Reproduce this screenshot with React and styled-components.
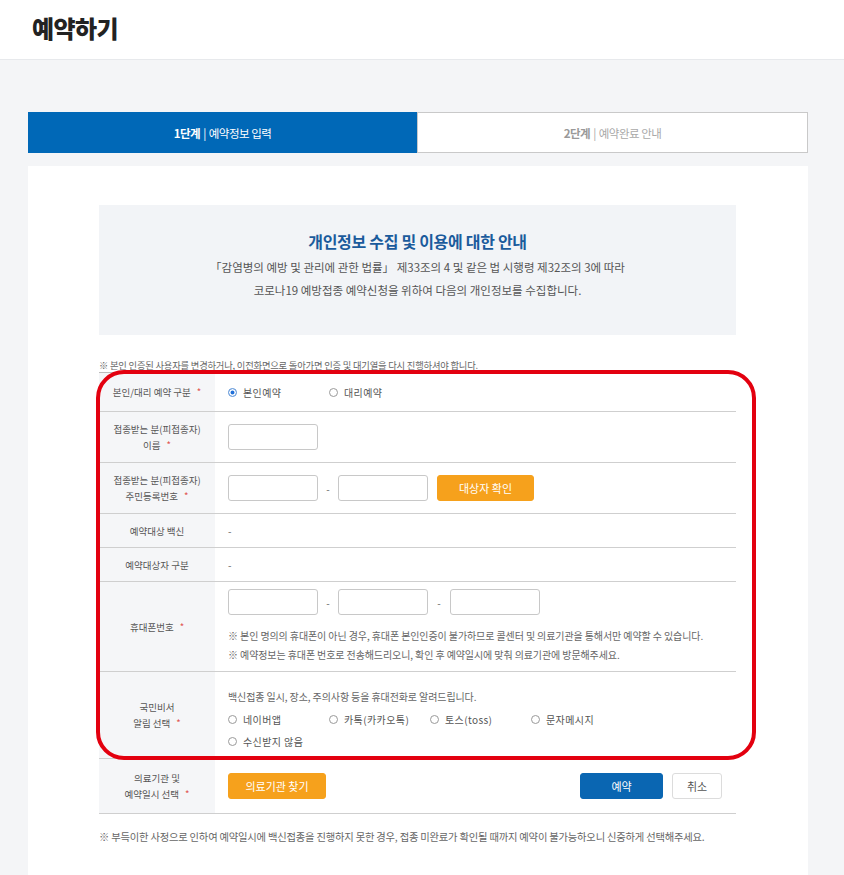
import React, { useState } from "react";
import styled, { createGlobalStyle } from "styled-components";

const GlobalStyle = createGlobalStyle`
  body {
    margin: 0;
    background: #f4f5f7;
    font-family: "Noto Sans CJK KR", "Noto Sans", sans-serif;
    color: #333;
  }
  * { box-sizing: border-box; }
`;

const Header = styled.header`
  height: 60px;
  display: flex;
  align-items: center;
  padding-left: 32px;
  background: #fff;
  border-bottom: 1px solid #e7e9ec;
`;

const PageTitle = styled.h1`
  margin: 0 0 4px;
  font-size: 24px;
  font-weight: 800;
  letter-spacing: -0.6px;
  color: #222;
`;

const Main = styled.main`
  padding: 52px 36px 0 28px;
`;

const Steps = styled.ol`
  display: flex;
  list-style: none;
  margin: 0;
  padding: 0;
  height: 41px;
`;

const Step = styled.li`
  flex: 1;
  display: flex;
  align-items: center;
  justify-content: center;
  font-size: 11.5px;
  letter-spacing: -0.5px;
  background: ${(p) => (p.$active ? "#0068b7" : "#fff")};
  color: ${(p) => (p.$active ? "#fff" : "#a9a9a9")};
  border: ${(p) => (p.$active ? "none" : "1px solid #c9c9c9")};

  > b {
    font-weight: 700;
    color: ${(p) => (p.$active ? "#fff" : "#999")};
  }
  > i {
    font-style: normal;
    margin: 0 3px;
  }
`;

const Card = styled.section`
  margin-top: 13px;
  background: #fff;
  padding: 39px 72px 60px 71px;
`;

const InfoBox = styled.div`
  height: 130px;
  background: #f2f4f7;
  padding-top: 26px;
  text-align: center;
`;

const InfoTitle = styled.h2`
  margin: 0 0 5px;
  font-size: 16px;
  line-height: 20px;
  font-weight: 700;
  color: #1b5b9c;
  letter-spacing: -0.3px;
`;

const InfoText = styled.p`
  margin: 0;
  font-size: 11.5px;
  line-height: 23px;
  color: #555;
`;

const Notice = styled.p`
  margin: ${(p) => p.$mt}px 0 0;
  font-size: ${(p) => p.$size || 9.3}px;
  line-height: 14px;
  color: #666;
  letter-spacing: -0.2px;
`;

const FormTable = styled.div`
  position: relative;
  border-top: 1px solid #bbb;
`;

const Highlight = styled.div`
  position: absolute;
  top: -3px;
  left: -3px;
  right: -20px;
  height: 390px;
  border: 4px solid #e3000f;
  border-radius: 28px;
  pointer-events: none;
`;

const Row = styled.div`
  display: grid;
  grid-template-columns: 116px 1fr;
  height: ${(p) => p.$h}px;
  border-bottom: 1px solid #cfcfcf;
`;

const Label = styled.div`
  display: flex;
  align-items: center;
  justify-content: center;
  text-align: center;
  background: #f5f6f8;
  font-size: 9.5px;
  line-height: 16px;
  color: #555;
`;

const Req = styled.span`
  color: #e0504c;
  margin-left: 6px;
`;

const Value = styled.div`
  display: flex;
  flex-direction: ${(p) => (p.$column ? "column" : "row")};
  justify-content: ${(p) => (p.$column ? "center" : "flex-start")};
  align-items: ${(p) => (p.$column ? "flex-start" : "center")};
  padding: 0 14px 0 13px;
  font-size: 10px;
  color: #666;
`;

const Line = styled.div`
  display: flex;
  align-items: center;
  width: 100%;
`;

const RadioGroup = styled.div`
  display: flex;
  flex-wrap: wrap;
  row-gap: 2px;
  margin-top: ${(p) => p.$mt || 0}px;
`;

const RadioItem = styled.label`
  display: inline-flex;
  align-items: center;
  gap: 6px;
  width: 101px;
  height: 20px;
  font-size: 10px;
  color: #555;
  letter-spacing: 0.4px;
  cursor: pointer;
`;

const RadioDot = styled.span`
  width: 9px;
  height: 9px;
  border-radius: 50%;
  border: 1px solid ${(p) => (p.$on ? "#7aa6dc" : "#9a9a9a")};
  background: ${(p) => (p.$on ? "#1f6fd8" : "#fff")};
  box-shadow: ${(p) => (p.$on ? "inset 0 0 0 1.5px #fff" : "none")};
`;

const TextInput = styled.input`
  width: 90px;
  height: 26px;
  border: 1px solid #c8c8c8;
  border-radius: 3px;
  padding: 0 6px;
  font-size: 10px;
`;

const Dash = styled.span`
  width: ${(p) => p.$w || 20}px;
  text-align: center;
  color: #666;
`;

const Button = styled.button`
  height: 26px;
  width: ${(p) => p.$w}px;
  border-radius: 3px;
  font-family: inherit;
  font-size: 11px;
  cursor: pointer;
  border: 1px solid
    ${(p) => (p.$kind === "orange" ? "#f6a11c" : p.$kind === "blue" ? "#0a66b2" : "#dcdcdc")};
  background: ${(p) => (p.$kind === "orange" ? "#f6a11c" : p.$kind === "blue" ? "#0a66b2" : "#fff")};
  color: ${(p) => (p.$kind === "ghost" ? "#555" : "#fff")};
  margin-left: ${(p) => p.$ml || 0}px;
`;

const Hint = styled.p`
  margin: ${(p) => p.$mt || 0}px 0 0;
  font-size: 10px;
  line-height: 19px;
  color: #666;
  letter-spacing: -0.1px;
`;

const Spacer = styled.div`
  flex: 1;
`;

function Radio({ checked, onChange, children }) {
  return (
    <RadioItem onClick={onChange}>
      <RadioDot $on={checked} />
      {children}
    </RadioItem>
  );
}

function FieldLabel({ lines, required }) {
  return (
    <Label>
      <span>
        {lines.map((l, i) => (
          <React.Fragment key={i}>
            {i > 0 && <br />}
            {l}
          </React.Fragment>
        ))}
        {required && <Req>*</Req>}
      </span>
    </Label>
  );
}

const alarmOptions = ["네이버앱", "카톡(카카오톡)", "토스(toss)", "문자메시지", "수신받지 않음"];

export default function App() {
  const [who, setWho] = useState("self");
  const [alarm, setAlarm] = useState(null);

  return (
    <>
      <GlobalStyle />
      <Header>
        <PageTitle>예약하기</PageTitle>
      </Header>
      <Main>
        <Steps>
          <Step $active>
            <b>1단계</b>
            <i>|</i>예약정보 입력
          </Step>
          <Step>
            <b>2단계</b>
            <i>|</i>예약완료 안내
          </Step>
        </Steps>

        <Card>
          <InfoBox>
            <InfoTitle>개인정보 수집 및 이용에 대한 안내</InfoTitle>
            <InfoText>
              「감염병의 예방 및 관리에 관한 법률」 제33조의 4 및 같은 법 시행령 제32조의 3에 따라
            </InfoText>
            <InfoText>코로나19 예방접종 예약신청을 위하여 다음의 개인정보를 수집합니다.</InfoText>
          </InfoBox>

          <Notice $mt={23}>
            ※ 본인 인증된 사용자를 변경하거나, 이전화면으로 돌아가면 인증 및 대기열을 다시 진행하셔야 합니다.
          </Notice>

          <FormTable>
            <Row $h={39}>
              <FieldLabel lines={["본인/대리 예약 구분"]} required />
              <Value>
                <Radio checked={who === "self"} onChange={() => setWho("self")}>
                  본인예약
                </Radio>
                <Radio checked={who === "proxy"} onChange={() => setWho("proxy")}>
                  대리예약
                </Radio>
              </Value>
            </Row>

            <Row $h={51}>
              <FieldLabel lines={["접종받는 분(피접종자)", "이름"]} required />
              <Value>
                <TextInput />
              </Value>
            </Row>

            <Row $h={51}>
              <FieldLabel lines={["접종받는 분(피접종자)", "주민등록번호"]} required />
              <Value>
                <TextInput />
                <Dash>-</Dash>
                <TextInput />
                <Button $kind="orange" $w={97} $ml={9}>
                  대상자 확인
                </Button>
              </Value>
            </Row>

            <Row $h={34}>
              <FieldLabel lines={["예약대상 백신"]} />
              <Value>-</Value>
            </Row>

            <Row $h={34}>
              <FieldLabel lines={["예약대상자 구분"]} />
              <Value>-</Value>
            </Row>

            <Row $h={90}>
              <FieldLabel lines={["휴대폰번호"]} required />
              <Value $column>
                <Line>
                  <TextInput />
                  <Dash>-</Dash>
                  <TextInput />
                  <Dash $w={22}>-</Dash>
                  <TextInput />
                </Line>
                <Hint $mt={11}>
                  ※ 본인 명의의 휴대폰이 아닌 경우, 휴대폰 본인인증이 불가하므로 콜센터 및 의료기관을 통해서만 예약할 수 있습니다.
                </Hint>
                <Hint>※ 예약정보는 휴대폰 번호로 전송해드리오니, 확인 후 예약일시에 맞춰 의료기관에 방문해주세요.</Hint>
              </Value>
            </Row>

            <Row $h={87}>
              <FieldLabel lines={["국민비서", "알림 선택"]} required />
              <Value $column>
                <Hint $mt={8}>백신접종 일시, 장소, 주의사항 등을 휴대전화로 알려드립니다.</Hint>
                <RadioGroup $mt={3}>
                  {alarmOptions.map((o) => (
                    <Radio key={o} checked={alarm === o} onChange={() => setAlarm(o)}>
                      {o}
                    </Radio>
                  ))}
                </RadioGroup>
              </Value>
            </Row>

            <Row $h={55}>
              <FieldLabel lines={["의료기관 및", "예약일시 선택"]} required />
              <Value>
                <Button $kind="orange" $w={98}>
                  의료기관 찾기
                </Button>
                <Spacer />
                <Button $kind="blue" $w={83}>
                  예약
                </Button>
                <Button $kind="ghost" $w={50} $ml={9}>
                  취소
                </Button>
              </Value>
            </Row>

            <Highlight />
          </FormTable>

          <Notice $mt={16} $size={10.3}>
            ※ 부득이한 사정으로 인하여 예약일시에 백신접종을 진행하지 못한 경우, 접종 미완료가 확인될 때까지 예약이 불가능하오니 신중하게 선택해주세요.
          </Notice>
        </Card>
      </Main>
    </>
  );
}
